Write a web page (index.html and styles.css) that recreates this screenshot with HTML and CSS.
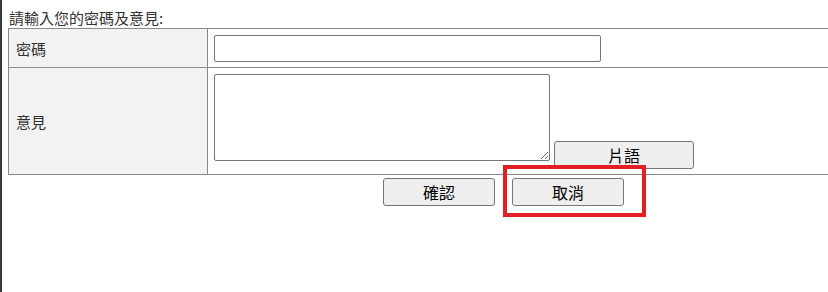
FILE: index.html
```html
<!DOCTYPE html>
<html>
<head>
  <meta charset="utf-8">
  <link rel="stylesheet" href="styles.css">
</head>
<body>
  <div class="form-wrap">
    <div class="intro">請輸入您的密碼及意見:</div>

    <table class="form-table">
      <tr class="row-pass">
        <td class="label">密碼</td>
        <td class="field">
          <input type="password" class="pass-input">
        </td>
      </tr>
      <tr class="row-note">
        <td class="label">意見</td>
        <td class="field">
          <div class="note-group">
            <textarea class="note-input"></textarea>
            <button class="btn phrase-btn">片語</button>
          </div>
        </td>
      </tr>
    </table>

    <div class="actions">
      <button class="btn action-btn">確認</button>
      <button class="btn action-btn">取消</button>
    </div>
  </div>

  <!-- annotation box -->
  <div class="mark"></div>
</body>
</html>
```

FILE: styles.css
```css
html {
  border-left: 2px solid #3a3a3a;
  overflow: hidden;
  height: 100%;
  box-sizing: border-box;
}

body {
  margin: 0 0 0 6px;
  padding: 0;
  font-family: "Noto Sans CJK TC", "Noto Sans", sans-serif;
  font-size: 15px;
  color: #333;
  background: #fff;
  position: relative;
  height: 100%;
}

.form-wrap {
  width: 100%;
}

.intro {
  height: 21px;
  line-height: 21px;
  padding-top: 7px;
  padding-left: 1px;
}

.form-table {
  width: 100%;
  border-collapse: separate;
  border-spacing: 0;
  border-top: 1px solid #8a8a8a;
  border-left: 1px solid #8a8a8a;
}

.form-table td {
  border-bottom: 1px solid #8a8a8a;
  padding: 0;
}

.label {
  width: 191px;
  padding-left: 7px !important;
  background: #f2f2f2;
  border-right: 1px solid #8a8a8a;
  vertical-align: middle;
}

.field {
  padding: 6px 6px 5px 6px !important;
}

.row-pass .label {
  height: 37px;
}

.pass-input {
  display: block;
  box-sizing: border-box;
  width: 387px;
  height: 27px;
  margin: 0;
  border: 1px solid #767676;
  border-radius: 2px;
  padding: 2px 4px;
}

.note-group {
  display: flex;
  align-items: flex-end;
  gap: 4px;
}

.note-input {
  display: block;
  box-sizing: border-box;
  width: 336px;
  height: 87px;
  margin: 0 0 8px 0;
  border: 1px solid #767676;
  border-radius: 2px;
  resize: both;
}

.btn {
  box-sizing: border-box;
  height: 28px;
  margin: 0;
  padding: 0;
  background: #efefef;
  border: 1px solid #767676;
  border-radius: 3px;
  font-family: "Noto Sans CJK TC", "Noto Sans", sans-serif;
  font-size: 16px;
  line-height: 26px;
  color: #000;
}

.phrase-btn {
  width: 140px;
}

.actions {
  display: flex;
  justify-content: center;
  gap: 17px;
  margin-top: 3px;
  padding-left: 171px;
}

.action-btn {
  width: 112px;
}

.mark {
  position: absolute;
  left: 495px;
  top: 165px;
  width: 143px;
  height: 52px;
  box-sizing: border-box;
  border: 4px solid #e31e24;
}
```
